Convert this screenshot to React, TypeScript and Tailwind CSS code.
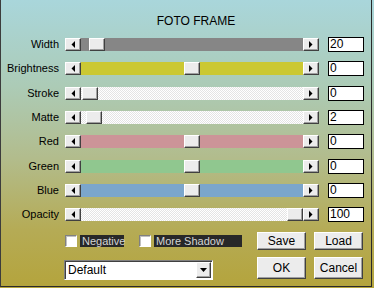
const dither = 'bg-[repeating-conic-gradient(#ffffff_0%_25%,#e4e4e4_0%_50%)] bg-[length:2px_2px]';

const raised =
  'border border-t-white border-l-white border-r-[#404040] border-b-[#404040] bg-[#ececec] shadow-[inset_-1px_-1px_0_#a0a0a0]';

const rows = [
  { label: 'Width', value: '20', track: 'bg-[#868686]', pos: 8, mt: 'mt-0' },
  { label: 'Brightness', value: '0', track: 'bg-[#cbc833]', pos: 103, mt: 'mt-[11px]' },
  { label: 'Stroke', value: '0', track: dither, pos: 1, mt: 'mt-[12px]' },
  { label: 'Matte', value: '2', track: dither, pos: 5, mt: 'mt-[11px]' },
  { label: 'Red', value: '0', track: 'bg-[#cc9498]', pos: 103, mt: 'mt-[11px]' },
  { label: 'Green', value: '0', track: 'bg-[#90c78f]', pos: 103, mt: 'mt-[12px]' },
  { label: 'Blue', value: '0', track: 'bg-[#7ba6cc]', pos: 103, mt: 'mt-[11px]' },
  { label: 'Opacity', value: '100', track: dither, pos: 206, mt: 'mt-[11px]' },
];

function Arrow({ dir }: { dir: 'left' | 'right' }) {
  return (
    <div className={`${raised} flex h-[13px] w-[16px] items-center justify-center`}>
      <svg width="4" height="7" viewBox="0 0 4 7">
        {dir === 'left' ? <polygon points="4,0 4,7 0.5,3.5" fill="#000" /> : <polygon points="0,0 0,7 3.5,3.5" fill="#000" />}
      </svg>
    </div>
  );
}

function SliderRow({ label, value, track, pos, mt }: (typeof rows)[number]) {
  return (
    <div className={`flex h-[13px] items-start ${mt}`}>
      <div className="w-[58px] text-right text-[11px] leading-[13px]">{label}</div>
      <div className="ml-[6px] flex h-[13px] w-[254px]">
        <Arrow dir="left" />
        <div className={`flex h-full flex-1 ${track}`}>
          <div className={`${raised} h-[13px] w-[16px]`} style={{ marginLeft: pos }} />
        </div>
        <Arrow dir="right" />
      </div>
      <div className="-mt-[1px] ml-[9px] h-[15px] w-[36px] border border-black bg-white pl-[1px] text-[12px] leading-[13px]">
        {value}
      </div>
    </div>
  );
}

function Check({ label, width }: { label: string; width: string }) {
  return (
    <div className="flex items-center">
      <div className="h-[12px] w-[12px] border border-t-[#808080] border-l-[#808080] border-r-white border-b-white bg-white shadow-[inset_1px_1px_0_#c0c0c0]" />
      <div className={`ml-[3px] h-[12px] ${width} bg-[#282828] pl-[2px] text-[11px] leading-[12px] text-[#d4d4d4]`}>{label}</div>
    </div>
  );
}

function Button({ children, tall }: { children: string; tall?: boolean }) {
  return (
    <button
      type="button"
      className={`${raised} flex w-[49px] items-center justify-center text-[12px] ${tall ? 'h-[22px]' : 'h-[18px]'}`}
    >
      {children}
    </button>
  );
}

export default function App() {
  return (
    <div className="h-[288px] w-[374px] bg-[linear-gradient(to_bottom,#a9d6db_0%,#accbb6_30%,#b2bc8c_55%,#b5ab55_80%,#b4a43c_100%)] font-['Liberation_Sans',Arial,sans-serif] text-black">
      <div className="h-[287px] w-[372px] border-b border-l border-r border-b-[#2a2a2a] border-l-[#3c3c3c] border-r-[#2a2a2a]">
        <div className="h-[38px] pl-[20px] pt-[15px] text-center text-[12px] leading-[12px]">FOTO FRAME</div>
        <div className="flex flex-col">
          {rows.map((r) => (
            <SliderRow key={r.label} {...r} />
          ))}
        </div>
        <div className="mt-[11px] flex h-[18px] items-center">
          <div className="ml-[64px] flex w-[192px] items-center">
            <Check label="Negative" width="w-[44px]" />
            <div className="ml-[15px]">
              <Check label="More Shadow" width="w-[88px]" />
            </div>
          </div>
          <div className="flex gap-[8px]">
            <Button>Save</Button>
            <Button>Load</Button>
          </div>
        </div>
        <div className="mt-[7px] flex items-start">
          <div className="ml-[63px] mt-[3px] flex h-[20px] w-[149px] items-center border border-t-[#808080] border-l-[#808080] border-r-white border-b-white bg-white shadow-[inset_1px_1px_0_#404040]">
            <span className="flex-1 pl-[3px] text-[12px]">Default</span>
            <div className={`${raised} mr-[1px] flex h-[16px] w-[15px] items-center justify-center`}>
              <svg width="7" height="4" viewBox="0 0 7 4">
                <polygon points="0,0 7,0 3.5,4" fill="#000" />
              </svg>
            </div>
          </div>
          <div className="ml-[44px] flex gap-[8px]">
            <Button tall>OK</Button>
            <Button tall>Cancel</Button>
          </div>
        </div>
      </div>
    </div>
  );
}
